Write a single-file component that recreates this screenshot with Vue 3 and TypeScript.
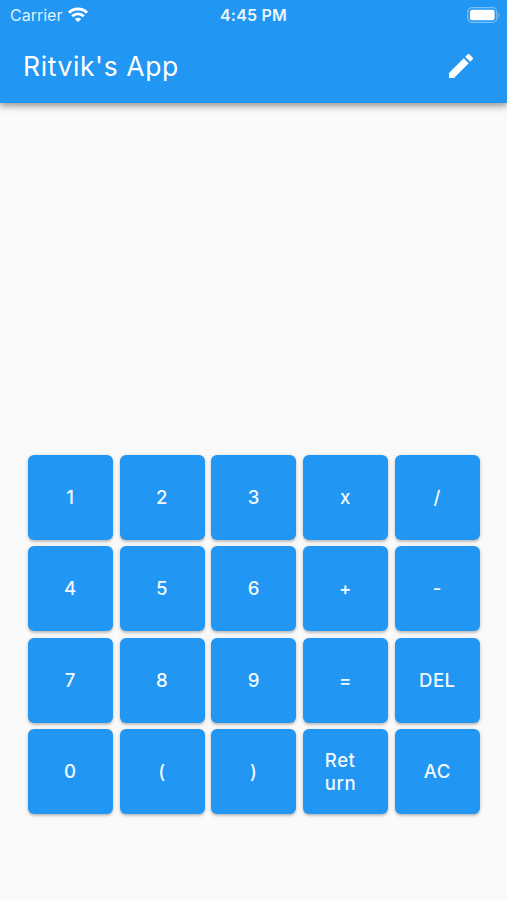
<script setup lang="ts">
interface Key {
  label: string
  lines: string[]
}

const labels: string[] = [
  '1', '2', '3', 'x', '/',
  '4', '5', '6', '+', '-',
  '7', '8', '9', '=', 'DEL',
  '0', '(', ')', 'Return', 'AC',
]

// Labels longer than three characters wrap inside the narrow key.
const keys: Key[] = labels.map((label) => ({
  label,
  lines: label.match(/.{1,3}/g) ?? [label],
}))
</script>

<template>
  <div class="screen">
    <header class="app-bar">
      <div class="status">
        <div class="carrier">
          <span>Carrier</span>
          <svg class="wifi" viewBox="0 0 20 15" fill="none" stroke="#fff" stroke-width="2.9">
            <path d="M1 5.7C6 .7 14 .7 19 5.7" />
            <path d="M4.2 9.3C7.5 6 12.5 6 15.8 9.3" />
            <path d="M10 15 6.8 11.9C8.5 10.3 11.5 10.3 13.2 11.9Z" fill="#fff" stroke="none" />
          </svg>
        </div>
        <span class="time">4:45 PM</span>
        <svg class="battery" viewBox="0 0 33 16">
          <rect x=".8" y=".6" width="29" height="14.8" rx="4.4" fill="none" stroke="#fff" stroke-opacity=".4" stroke-width="1.2" />
          <rect x="2.9" y="2.8" width="24.8" height="10.4" rx="2.3" fill="#fff" />
          <path d="M31.2 5.7c1.8.7 1.8 3.9 0 4.6Z" fill="#fff" fill-opacity=".4" />
        </svg>
      </div>
      <div class="toolbar">
        <h1>Ritvik's App</h1>
        <svg class="edit" viewBox="0 0 24 24" fill="#fff">
          <path d="M3 17.25V21h3.75L17.81 9.94l-3.75-3.75L3 17.25zM20.71 7.04c.39-.39.39-1.02 0-1.41l-2.34-2.34c-.39-.39-1.02-.39-1.41 0l-1.83 1.83 3.75 3.75 1.83-1.83z" />
        </svg>
      </div>
    </header>
    <main class="keypad">
      <button
        v-for="key in keys"
        :key="key.label"
        class="key"
        :class="{ wrapped: key.lines.length > 1 }"
        type="button"
      >
        <span class="label">
          <span v-for="line in key.lines" :key="line" class="line">{{ line }}</span>
        </span>
      </button>
    </main>
  </div>
</template>

<style>
body {
  margin: 0;
  background: #fafafa;
}
</style>

<style scoped>
.screen {
  display: flex;
  flex-direction: column;
  width: 507px;
  height: 900px;
  overflow: hidden;
  background: #fafafa;
  color: #fff;
  font-family: Inter, 'Liberation Sans', sans-serif;
}

.app-bar {
  flex: none;
  height: 103px;
  background: #2196f3;
  box-shadow: 0 2px 5px rgba(0, 0, 0, 0.22), 0 5px 6px rgba(0, 0, 0, 0.14), 0 1px 12px rgba(0, 0, 0, 0.1);
}

.status {
  display: grid;
  grid-template-columns: 1fr auto 1fr;
  align-items: center;
  box-sizing: border-box;
  height: 29px;
  padding: 0 7px 0 10px;
}

.carrier {
  display: flex;
  align-items: center;
  gap: 6px;
  font-size: 16px;
  color: rgba(255, 255, 255, 0.88);
}

.wifi {
  width: 20px;
  height: 15px;
}

.time {
  margin-right: 3px;
  font-size: 16px;
  font-weight: 600;
  letter-spacing: 0.2px;
  color: rgba(255, 255, 255, 0.92);
}

.battery {
  justify-self: end;
  width: 33px;
  height: 16px;
}

.toolbar {
  display: flex;
  align-items: center;
  justify-content: space-between;
  height: 73px;
  padding: 0 30px 0 23px;
}

h1 {
  margin: 0;
  font-size: 26.5px;
  font-weight: 400;
  letter-spacing: 0.6px;
}

.edit {
  width: 32px;
  height: 32px;
}

.keypad {
  display: grid;
  grid-template-columns: repeat(5, 85px);
  grid-auto-rows: 85px;
  gap: 6.6px 6.75px;
  padding: 351.6px 0 0 27.8px;
}

.key {
  display: flex;
  align-items: center;
  justify-content: center;
  padding: 0;
  border: 0;
  border-radius: 6px;
  background: #2196f3;
  box-shadow: 0 2px 2px rgba(0, 0, 0, 0.14), 0 1px 4px rgba(0, 0, 0, 0.16);
  color: #f1f9ff;
  font: inherit;
  font-size: 18.6px;
  font-weight: 500;
  line-height: 23px;
  letter-spacing: 0.5px;
}

.key.wrapped {
  justify-content: flex-start;
  padding-left: 21.8px;
}

.label {
  display: flex;
  flex-direction: column;
  text-align: left;
}
</style>
